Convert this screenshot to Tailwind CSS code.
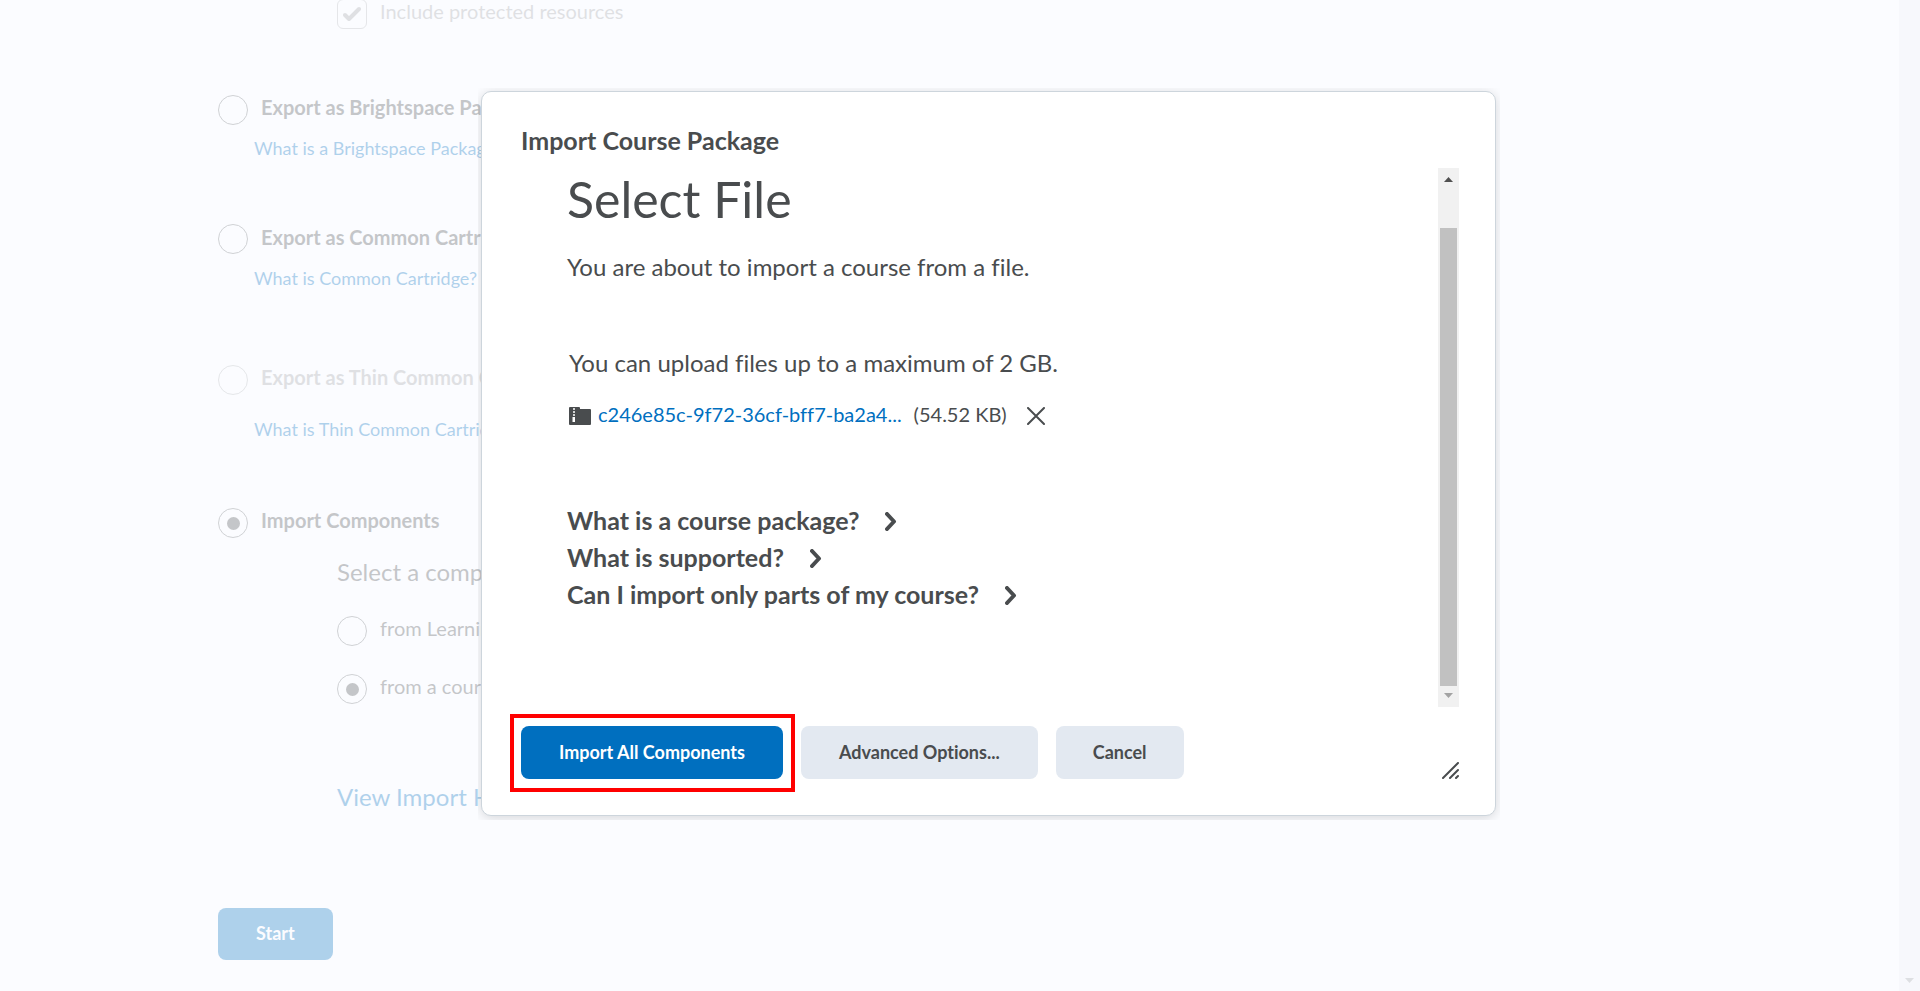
<!DOCTYPE html>
<html lang="en">
<head>
    <meta charset="UTF-8">
    <meta name="viewport" content="width=device-width, initial-scale=1.0">
    <title>Import/Export/Copy Components</title>
    <script src="https://cdn.jsdelivr.net/npm/@tailwindcss/browser@4"></script>
</head>
<body class="relative min-h-screen overflow-hidden bg-[#fbfcff] font-[Lato,sans-serif] text-[#494c4e] [font-variant-ligatures:none]">
    <!-- Page behind the dialog -->
    <div class="flex min-h-screen justify-between">
        <main class="flex flex-col items-start pl-[218px] text-xl/6 whitespace-nowrap opacity-30">
            <div class="-mt-px ml-[119px] flex h-24 items-start gap-[13px] opacity-50">
                <span class="relative flex">
                    <input id="protected" type="checkbox" checked disabled class="size-[30px] appearance-none rounded-md border border-[#6e7376]">
                    <svg class="absolute top-[7px] left-[6px]" width="18" height="16" viewBox="0 0 18 16" fill="none" stroke="#494c4e" stroke-width="4" stroke-linecap="round" stroke-linejoin="round"><path d="M2 9l4 4L16 3"/></svg>
                </span>
                <label for="protected">Include protected resources</label>
            </div>

            <div class="flex h-[41px] items-start gap-[13px] font-bold">
                <input id="brightspace" name="action" type="radio" class="size-[30px] appearance-none rounded-full border border-[#6e7376]">
                <label for="brightspace">Export as Brightspace Package</label>
            </div>
            <a href="#" class="ml-9 h-[88px] text-lg/6 text-[#006fbf]">What is a Brightspace Package?</a>

            <div class="flex h-[42px] items-start gap-[13px] font-bold">
                <input id="cartridge" name="action" type="radio" class="size-[30px] appearance-none rounded-full border border-[#6e7376]">
                <label for="cartridge" class="leading-[26px]">Export as Common Cartridge</label>
            </div>
            <a href="#" class="ml-9 h-[99px] text-lg/6 text-[#006fbf]">What is Common Cartridge?</a>

            <div class="flex h-[52px] items-start gap-[13px] font-bold opacity-50">
                <input id="thin" name="action" type="radio" disabled class="size-[30px] appearance-none rounded-full border border-[#6e7376]">
                <label for="thin">Export as Thin Common Cartridge</label>
            </div>
            <a href="#" class="ml-9 h-[91px] text-lg/6 text-[#006fbf]">What is Thin Common Cartridge?</a>

            <div class="flex h-[50px] items-start gap-[13px] font-bold">
                <span class="relative flex">
                    <input id="import" name="action" type="radio" checked class="size-[30px] appearance-none rounded-full border border-[#6e7376]">
                    <span class="absolute top-[9px] left-[9px] size-[13px] rounded-full bg-[#494c4e]"></span>
                </span>
                <label for="import">Import Components</label>
            </div>

            <div class="ml-[119px] flex flex-col items-start">
                <p class="h-[58px] text-2xl/7">Select a component</p>
                <div class="flex h-[58px] items-start gap-[13px]">
                    <input id="lor" name="source" type="radio" class="size-[30px] appearance-none rounded-full border border-[#6e7376]">
                    <label for="lor">from Learning Object Repository</label>
                </div>
                <div class="flex h-[109px] items-start gap-[13px]">
                    <span class="relative flex">
                        <input id="package" name="source" type="radio" checked class="size-[30px] appearance-none rounded-full border border-[#6e7376]">
                        <span class="absolute top-[9px] left-[9px] size-[13px] rounded-full bg-[#494c4e]"></span>
                    </span>
                    <label for="package">from a course package</label>
                </div>
                <a href="#" class="h-[125px] text-2xl/7 text-[#006fbf]">View Import History</a>
            </div>

            <button class="h-[52px] rounded-lg bg-[#006fbf] px-[38px] pb-[2px] text-lg/6 font-bold text-white">Start</button>
        </main>
        <div class="flex w-[21px] flex-col justify-end bg-[#f7f8fc] pb-2 pl-[6px]">
            <svg width="9" height="5" viewBox="0 0 9 5" fill="#dddfe2"><path d="M0 0h9L4.500 5z"/></svg>
        </div>
    </div>

    <!-- Dialog -->
    <div class="absolute top-[88px] left-[478px] w-[1022px] overflow-hidden pt-[3px] pr-1 pb-1 pl-[3px]">
        <section role="dialog" aria-labelledby="dialog-title" class="rounded-[10px] border border-[#cdd5dc] bg-white pt-[34px] pr-9 pb-9 pl-[39px] shadow-[0_2px_12px_rgba(0,0,0,0.15)]">
            <h2 id="dialog-title" class="h-[42px] text-[25px]/7 font-bold">Import Course Package</h2>

            <div class="flex h-[539px] justify-between">
                <div class="pl-[46px]">
                    <h1 class="h-[85px] text-[50px]/[62px]">Select File</h1>
                    <p class="h-24 text-2xl/7">You are about to import a course from a file.</p>
                    <p class="h-[53px] pl-[2px] text-2xl/7">You can upload files up to a maximum of 2 GB.</p>
                    <div class="flex h-[100px] items-start pl-[2px] text-xl/6">
                        <svg class="mt-[5px]" width="22" height="18" viewBox="0 0 22 18">
                            <path d="M1 0h9q1 0 1 1v1h10q1 0 1 1v14q0 1-1 1H1q-1 0-1-1V1q0-1 1-1z" fill="#494c4e"/>
                            <path d="M4 2h2M4 5h2M4 8h2" stroke="#fff" stroke-width="1.500"/>
                            <path d="M3.500 10h2.500v5H3.500z" fill="#fff"/>
                        </svg>
                        <a href="#" class="ml-[7px] text-[#006fbf]">c246e85c-9f72-36cf-bff7-ba2a4...</a>
                        <span class="ml-3">(54.52 KB)</span>
                        <button aria-label="Remove file" class="mt-[5px] ml-5">
                            <svg width="18" height="18" viewBox="0 0 18 18" fill="none" stroke="#494c4e" stroke-width="2" stroke-linecap="round"><path d="M1 1l16 16M17 1L1 17"/></svg>
                        </button>
                    </div>
                    <div class="flex flex-col items-start text-[25px]/[37px] font-bold">
                        <button class="flex items-center gap-[26px]">What is a course package?
                            <svg class="mt-[2px]" width="12" height="19" viewBox="0 0 12 19" fill="none" stroke="#494c4e" stroke-width="4" stroke-linecap="round" stroke-linejoin="round"><path d="M2 2l7 7.500L2 17"/></svg>
                        </button>
                        <button class="flex items-center gap-[26px]">What is supported?
                            <svg class="mt-[2px]" width="12" height="19" viewBox="0 0 12 19" fill="none" stroke="#494c4e" stroke-width="4" stroke-linecap="round" stroke-linejoin="round"><path d="M2 2l7 7.500L2 17"/></svg>
                        </button>
                        <button class="flex items-center gap-[26px]">Can I import only parts of my course?
                            <svg class="mt-[2px]" width="12" height="19" viewBox="0 0 12 19" fill="none" stroke="#494c4e" stroke-width="4" stroke-linecap="round" stroke-linejoin="round"><path d="M2 2l7 7.500L2 17"/></svg>
                        </button>
                    </div>
                </div>
                <!-- Scrollbar -->
                <div class="flex w-[21px] flex-col items-center bg-[#f1f1f1] pt-2 pb-[9px]">
                    <svg class="mt-px" width="9" height="5" viewBox="0 0 9 5" fill="#505050"><path d="M0 5h9L4.500 0z"/></svg>
                    <div class="mt-[46px] mb-[7px] w-[17px] grow bg-[#c1c1c1]"></div>
                    <svg width="9" height="5" viewBox="0 0 9 5" fill="#a3a3a3"><path d="M0 0h9L4.500 5z"/></svg>
                </div>
            </div>

            <div class="mt-[19px] flex items-end justify-between">
                <div class="flex gap-[18px] text-lg/6 font-bold">
                    <div class="relative">
                        <button class="h-[53px] rounded-lg bg-[#006fbf] px-[38px] pb-[2px] text-white">Import All Components</button>
                        <div class="pointer-events-none absolute -top-3 -right-3 -bottom-[13px] -left-[11px] border-4 border-[#ff0000]"></div>
                    </div>
                    <button class="h-[53px] rounded-lg bg-[#e3e9f1] px-[38px] pb-[2px]">Advanced Options...</button>
                    <button class="h-[53px] rounded-lg bg-[#e3e9f1] px-[37px] pb-[2px]">Cancel</button>
                </div>
                <svg width="17" height="17" viewBox="0 0 17 17" fill="none" stroke="#494c4e" stroke-width="2" stroke-linecap="round"><path d="M1 16L16 1M8 16l8-8M14 16l2-2"/></svg>
            </div>
        </section>
    </div>
</body>
</html>
